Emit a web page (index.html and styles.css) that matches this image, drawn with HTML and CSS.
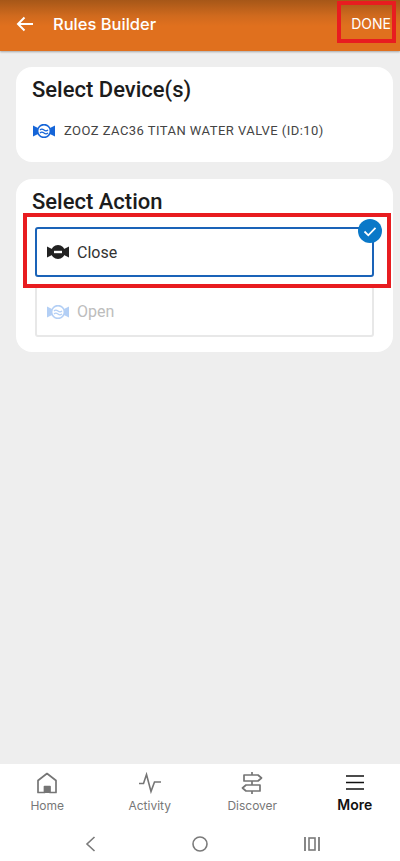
FILE: index.html
```html
<!DOCTYPE html>
<html lang="en">

<head>
    <meta charset="UTF-8">
    <meta name="viewport" content="width=device-width, initial-scale=1.0">
    <title>Rules Builder</title>
    <link rel="stylesheet" href="styles.css">
</head>

<body>
    <header class="appbar">
        <svg class="back" width="18" height="16" viewBox="0 0 18 16">
            <path d="M17 8H2M8.500 1.500L2 8l6.500 6.500" fill="none" stroke="#fff" stroke-width="2"/>
        </svg>
        <h1>Rules Builder</h1>
        <a class="done" href="#">DONE</a>
        <span class="mark mark-done"></span>
    </header>

    <main>
        <section class="card card-device">
            <h2>Select Device(s)</h2>
            <div class="device">
                <svg class="valve" width="22" height="14" viewBox="0 0 22 14">
                    <path d="M0 1.500l5 2.500h12l5-2.500v11l-5-2.500H5l-5 2.500z" fill="#1565d8"/>
                    <circle cx="11" cy="7" r="6.400" fill="#fff" stroke="#1565d8" stroke-width="1.600"/>
                    <path d="M7 6c1.500-1.600 2.700-1 4 0s2.500 1.400 4-.2M7 9c1.500-1.600 2.700-1 4 0s2.500 1.400 4-.2" fill="none" stroke="#1565d8" stroke-width="1.200"/>
                </svg>
                <span>ZOOZ ZAC36 TITAN WATER VALVE (ID:10)</span>
            </div>
        </section>

        <section class="card card-action">
            <h2>Select Action</h2>
            <div class="option option-on">
                <svg class="valve" width="22" height="14" viewBox="0 0 22 14">
                    <path d="M0 1.500l5 2.500h12l5-2.500v11l-5-2.500H5l-5 2.500z" fill="#222"/>
                    <circle cx="11" cy="7" r="7" fill="#222"/>
                    <rect x="7" y="5.800" width="8" height="2.400" fill="#fff"/>
                </svg>
                <span>Close</span>
                <span class="tick">
                    <svg width="14" height="11" viewBox="0 0 14 11">
                        <path d="M1.500 5.500l3.800 3.800L12.500 1.800" fill="none" stroke="#fff" stroke-width="1.800"/>
                    </svg>
                </span>
            </div>
            <div class="option option-off">
                <svg class="valve" width="22" height="14" viewBox="0 0 22 14">
                    <path d="M0 1.500l5 2.500h12l5-2.500v11l-5-2.500H5l-5 2.500z" fill="#b3cff5"/>
                    <circle cx="11" cy="7" r="6.400" fill="#fff" stroke="#b3cff5" stroke-width="1.600"/>
                    <path d="M7 6c1.500-1.600 2.700-1 4 0s2.500 1.400 4-.2M7 9c1.500-1.600 2.700-1 4 0s2.500 1.400 4-.2" fill="none" stroke="#b3cff5" stroke-width="1.200"/>
                </svg>
                <span>Open</span>
            </div>
            <span class="mark mark-close"></span>
        </section>
    </main>

    <nav class="tabs">
        <a class="tab" href="#">
            <svg width="20" height="22" viewBox="0 0 20 22">
                <path d="M1 20.500V8.500L10 1.500l9 7v12h-6v-6H7.500v6z" fill="none" stroke="#757575" stroke-width="1.700" stroke-linejoin="round"/>
                <rect x="7" y="14" width="6" height="7" fill="#757575"/>
            </svg>
            <span>Home</span>
        </a>
        <a class="tab" href="#">
            <svg width="24" height="22" viewBox="0 0 24 22">
                <path d="M1 11.500h4.500l3-9 4.500 17 3.500-9.500h6.500" fill="none" stroke="#757575" stroke-width="1.600"/>
            </svg>
            <span>Activity</span>
        </a>
        <a class="tab" href="#">
            <svg width="22" height="22" viewBox="0 0 22 22">
                <path d="M11 0v3M11 9v4M11 19v3" stroke="#757575" stroke-width="1.700"/>
                <path d="M3 3h14l3.500 3L17 9H3zM19 13H5l-3.500 3L5 19h14z" fill="none" stroke="#757575" stroke-width="1.700" stroke-linejoin="round"/>
            </svg>
            <span>Discover</span>
        </a>
        <a class="tab tab-on" href="#">
            <svg width="20" height="22" viewBox="0 0 20 22">
                <path d="M1 4h18M1 10.500h18M1 17h18" stroke="#111" stroke-width="1.600"/>
            </svg>
            <span>More</span>
        </a>
    </nav>

    <div class="sysnav">
        <svg width="11" height="16" viewBox="0 0 11 16">
            <path d="M9.500 1L2 8l7.500 7" fill="none" stroke="#7a7a7a" stroke-width="1.600"/>
        </svg>
        <svg width="16" height="16" viewBox="0 0 16 16">
            <circle cx="8" cy="8" r="7" fill="none" stroke="#7a7a7a" stroke-width="1.600"/>
        </svg>
        <svg width="16" height="14" viewBox="0 0 16 14">
            <path d="M1 0v14M15 0v14" stroke="#7a7a7a" stroke-width="1.800"/>
            <rect x="5" y="1" width="6" height="12" fill="none" stroke="#7a7a7a" stroke-width="1.600"/>
        </svg>
    </div>
</body>

</html>
```

FILE: styles.css
```css
body {
    font-family: Roboto, Arial, sans-serif;
    margin: 0;
    padding: 0;
    background-color: #eeeeee;
    display: flex;
    flex-direction: column;
    height: 861px;
    overflow: hidden;
}

a {
    text-decoration: none;
}

.appbar {
    position: relative;
    display: flex;
    align-items: center;
    height: 51px;
    padding: 0 0 4px 16px;
    box-sizing: border-box;
    flex-shrink: 0;
    background: linear-gradient(#a65718 0, #d06a1e 16px, #e0701e 26px, #e0701e 100%);
    box-shadow: 0 1px 2px rgba(0, 0, 0, 0.3);
    color: #fff;
}

.back {
    margin-right: 19px;
}

.appbar h1 {
    font-family: Inter, Roboto, sans-serif;
    font-size: 16.5px;
    font-weight: 500;
    margin: 0;
    flex: 1;
}

.done {
    font-family: Inter, Roboto, sans-serif;
    font-size: 14px;
    color: #fff;
    margin-right: 9px;
}

.mark {
    position: absolute;
    border: 4px solid #e81c20;
    box-sizing: border-box;
}

.mark-done {
    left: 337px;
    top: 1px;
    width: 59px;
    height: 42px;
}

.mark-close {
    left: 7px;
    top: 34px;
    width: 368px;
    height: 75px;
}

main {
    flex: 1;
    padding: 16px 7px 0 16px;
}

.card {
    position: relative;
    background-color: #fff;
    border-radius: 16px;
    box-sizing: border-box;
}

.card h2 {
    font-size: 22px;
    font-weight: 500;
    color: #1c1c1c;
    margin: 0;
    line-height: 26px;
}

.card-device {
    height: 95px;
    padding: 10px 16px;
    margin-bottom: 17px;
}

.device {
    display: flex;
    align-items: center;
    gap: 9px;
    margin-top: 20px;
    padding-left: 1px;
    font-size: 13px;
    letter-spacing: 0.46px;
    color: #444;
}

.card-action {
    height: 173px;
    padding: 10px 19px 16px 19px;
}

.card-action h2 {
    margin: 0 0 12px -3px;
}

.option {
    position: relative;
    display: flex;
    align-items: center;
    gap: 8px;
    padding-left: 10px;
    box-sizing: border-box;
    border-radius: 3px;
    font-size: 16px;
}

.option-on {
    height: 50px;
    border: 2px solid #1a63b8;
    color: #333;
    margin-bottom: 9px;
}

.option-off {
    height: 51px;
    border: 2px solid #e8e8e8;
    color: #bdbdbd;
}

.tick {
    position: absolute;
    right: -10px;
    top: -10px;
    width: 24px;
    height: 24px;
    border-radius: 50%;
    background-color: #0a78c8;
    display: flex;
    align-items: center;
    justify-content: center;
}

.tabs {
    display: grid;
    grid-template-columns: repeat(4, 102.5px);
    margin-left: -4px;
    height: 62px;
    padding-top: 8px;
    box-sizing: border-box;
    background-color: #fff;
    flex-shrink: 0;
    width: 404px;
}

.tab {
    display: flex;
    flex-direction: column;
    align-items: center;
    gap: 4px;
    font-family: Inter, Roboto, sans-serif;
    font-size: 12px;
    color: #777;
}

.tab-on {
    font-size: 14px;
    font-weight: 600;
    color: #111;
    gap: 2px;
}

.sysnav {
    display: flex;
    align-items: center;
    justify-content: center;
    gap: 96px;
    height: 35px;
    padding-left: 5px;
    background-color: #fff;
    flex-shrink: 0;
}
```
